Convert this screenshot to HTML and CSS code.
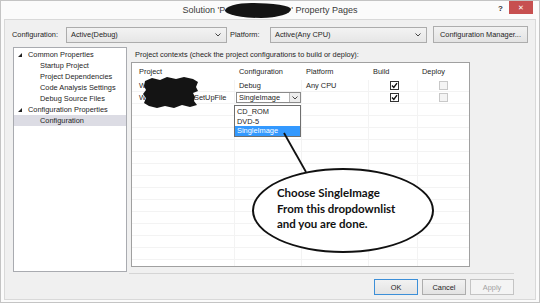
FILE: index.html
```html
<!DOCTYPE html>
<html lang="en">
<head>
    <meta charset="UTF-8">
    <title>Solution Property Pages</title>
    <link rel="stylesheet" href="styles.css">
</head>
<body>
    <div class="window">
        <div class="titlebar">
            <div class="title">Solution 'P<span class="blot-title"></span>' Property Pages</div>
            <div class="title-tools">
                <span class="title-help">?</span>
                <span class="title-close">&#x2715;</span>
            </div>
        </div>
        <div class="client">
            <div class="toolbar">
                <span class="lbl lbl-config">Configuration:</span>
                <div class="combo combo-config">
                    <span>Active(Debug)</span>
                    <svg width="6" height="4" viewBox="0 0 6 4"><path d="M0.5 0.5L3 3L5.5 0.5" fill="none" stroke="#444" stroke-width="1"/></svg>
                </div>
                <span class="lbl lbl-platform">Platform:</span>
                <div class="combo combo-platform">
                    <span>Active(Any CPU)</span>
                    <svg width="6" height="4" viewBox="0 0 6 4"><path d="M0.5 0.5L3 3L5.5 0.5" fill="none" stroke="#444" stroke-width="1"/></svg>
                </div>
                <button class="btn btn-manager">Configuration Manager...</button>
            </div>

            <div class="main">
                <ul class="tree">
                    <li class="node"><svg class="expander" width="4" height="4" viewBox="0 0 4 4"><polygon points="4,0 4,4 0,4" fill="#222"/></svg>Common Properties</li>
                    <li class="leaf">Startup Project</li>
                    <li class="leaf">Project Dependencies</li>
                    <li class="leaf">Code Analysis Settings</li>
                    <li class="leaf">Debug Source Files</li>
                    <li class="node"><svg class="expander" width="4" height="4" viewBox="0 0 4 4"><polygon points="4,0 4,4 0,4" fill="#222"/></svg>Configuration Properties</li>
                    <li class="leaf selected">Configuration</li>
                </ul>

                <div class="contexts">
                    <div class="contexts-label">Project contexts (check the project configurations to build or deploy):</div>
                    <div class="grid">
                        <div class="row row-head">
                            <div class="cell">Project</div>
                            <div class="cell">Configuration</div>
                            <div class="cell">Platform</div>
                            <div class="cell">Build</div>
                            <div class="cell">Deploy</div>
                        </div>
                        <div class="row">
                            <div class="cell">W</div>
                            <div class="cell">Debug</div>
                            <div class="cell">Any CPU</div>
                            <div class="cell cell-check"><span class="check"><svg width="7" height="7" viewBox="0 0 7 7"><path d="M1 3.6L2.8 5.4L6 1.2" fill="none" stroke="#111" stroke-width="1.4"/></svg></span></div>
                            <div class="cell cell-check"><span class="check check-off"></span></div>
                        </div>
                        <div class="row">
                            <div class="cell">W<span class="hidden-name"></span>SetUpFile</div>
                            <div class="cell cell-combo">
                                <div class="edit-combo">
                                    <span class="edit-text">SingleImage</span>
                                    <span class="edit-arrow"><svg width="6" height="4" viewBox="0 0 6 4"><path d="M0.5 0.5L3 3L5.5 0.5" fill="none" stroke="#444" stroke-width="1"/></svg></span>
                                </div>
                            </div>
                            <div class="cell"></div>
                            <div class="cell cell-check"><span class="check"><svg width="7" height="7" viewBox="0 0 7 7"><path d="M1 3.6L2.8 5.4L6 1.2" fill="none" stroke="#111" stroke-width="1.4"/></svg></span></div>
                            <div class="cell cell-check"><span class="check check-off"></span></div>
                        </div>
                        <div class="row"><div class="cell"></div><div class="cell"></div><div class="cell"></div><div class="cell"></div><div class="cell"></div></div>
                        <div class="row"><div class="cell"></div><div class="cell"></div><div class="cell"></div><div class="cell"></div><div class="cell"></div></div>
                        <div class="row"><div class="cell"></div><div class="cell"></div><div class="cell"></div><div class="cell"></div><div class="cell"></div></div>
                        <div class="row"><div class="cell"></div><div class="cell"></div><div class="cell"></div><div class="cell"></div><div class="cell"></div></div>
                        <div class="row"><div class="cell"></div><div class="cell"></div><div class="cell"></div><div class="cell"></div><div class="cell"></div></div>
                        <div class="row"><div class="cell"></div><div class="cell"></div><div class="cell"></div><div class="cell"></div><div class="cell"></div></div>
                        <div class="row"><div class="cell"></div><div class="cell"></div><div class="cell"></div><div class="cell"></div><div class="cell"></div></div>
                        <div class="row"><div class="cell"></div><div class="cell"></div><div class="cell"></div><div class="cell"></div><div class="cell"></div></div>
                        <div class="row"><div class="cell"></div><div class="cell"></div><div class="cell"></div><div class="cell"></div><div class="cell"></div></div>
                        <div class="row"><div class="cell"></div><div class="cell"></div><div class="cell"></div><div class="cell"></div><div class="cell"></div></div>
                        <div class="row"><div class="cell"></div><div class="cell"></div><div class="cell"></div><div class="cell"></div><div class="cell"></div></div>
                        <div class="row"><div class="cell"></div><div class="cell"></div><div class="cell"></div><div class="cell"></div><div class="cell"></div></div>
                        <div class="row"><div class="cell"></div><div class="cell"></div><div class="cell"></div><div class="cell"></div><div class="cell"></div></div>
                        <div class="row"><div class="cell"></div><div class="cell"></div><div class="cell"></div><div class="cell"></div><div class="cell"></div></div>

                        <!-- scribbled-out project names -->
                        <svg class="blot-grid" width="56" height="31" viewBox="0 0 56 31">
                            <path d="M2 4 L9 1 L17 3 L24 0 L33 2 L41 0 L50 2 L55 5 L53 10 L55 14 L50 16 L52 20 L51 24 L54 28 L47 30 L39 28 L31 31 L22 29 L14 31 L6 29 L1 26 L3 21 L0 17 L3 13 L1 9 Z" fill="#141414"/>
                        </svg>

                        <ul class="dropdown">
                            <li>CD_ROM</li>
                            <li>DVD-5</li>
                            <li class="active">SingleImage</li>
                        </ul>
                    </div>
                </div>
            </div>

            <div class="footer">
                <div class="separator"></div>
                <div class="buttons">
                    <button class="btn btn-ok">OK</button>
                    <button class="btn">Cancel</button>
                    <button class="btn btn-disabled">Apply</button>
                </div>
            </div>
        </div>
    </div>

    <!-- annotation drawn over the screenshot -->
    <svg class="callout-line" width="540" height="303" viewBox="0 0 540 303">
        <line x1="284" y1="133" x2="306" y2="172" stroke="#111" stroke-width="1.8"/>
    </svg>
    <div class="callout">
        Choose SingleImage<br>
        From this dropdownlist<br>
        and you are done.
    </div>
</body>
</html>
```

FILE: styles.css
```css
body {
    margin: 0;
    background: #fff;
    font-family: "Liberation Sans", Arial, sans-serif;
    font-size: 7.4px;
    color: #1e1e1e;
}
ul {
    margin: 0;
    padding: 0;
    list-style: none;
}
.window {
    width: 540px;
    height: 303px;
    box-sizing: border-box;
    border: 1px solid #c4c4c4;
    background: #fbfbfb;
    padding: 0 3px 2px;
    display: flex;
    flex-direction: column;
}

/* title bar */
.titlebar {
    height: 18px;
    display: grid;
    grid-template-columns: 1fr auto 1fr;
}
.title {
    grid-column: 2;
    font-size: 9px;
    line-height: 18px;
    color: #3a3a3a;
    white-space: nowrap;
}
.blot-title {
    display: inline-block;
    width: 66px;
    height: 15px;
    vertical-align: middle;
    background: #141414;
    border-radius: 40% 60% 45% 55% / 50% 40% 60% 50%;
}
.title-tools {
    grid-column: 3;
    justify-self: end;
    display: flex;
    align-items: flex-start;
}
.title-help {
    font-size: 8px;
    font-weight: bold;
    color: #333;
    margin: 3px 6px 0 0;
}
.title-close {
    width: 24px;
    height: 13px;
    margin-right: 3px;
    background: #c75050;
    color: #fff;
    font-size: 7px;
    display: flex;
    align-items: center;
    justify-content: center;
}

/* dialog body */
.client {
    flex: 1;
    border: 1px solid #d9d9d9;
    background: #f0f0f0;
    display: flex;
    flex-direction: column;
}
.toolbar {
    display: flex;
    align-items: center;
    height: 17px;
    padding: 6px 0 0 7px;
}
.lbl-config {
    width: 54px;
}
.lbl-platform {
    width: 40px;
    padding-left: 3px;
}
.combo {
    box-sizing: border-box;
    height: 16px;
    border: 1px solid #acacac;
    background: linear-gradient(#f3f3f3, #e6e6e6);
    display: flex;
    align-items: center;
    justify-content: space-between;
    padding: 0 5px 0 4px;
}
.combo-config {
    width: 161px;
}
.combo-platform {
    width: 157px;
}
.btn {
    box-sizing: border-box;
    height: 16px;
    width: 44px;
    padding: 0;
    border: 1px solid #adadad;
    background: linear-gradient(#f2f2f2, #e3e3e3);
    font-family: inherit;
    font-size: 7.4px;
    color: #1e1e1e;
}
.btn-manager {
    width: 95px;
    height: 17px;
    margin-left: 6px;
}

.main {
    display: flex;
    height: 225px;
    margin-top: 4px;
    padding-left: 8px;
}
.tree {
    box-sizing: border-box;
    width: 114px;
    height: 225px;
    border: 1px solid #a9abb0;
    background: #fff;
    padding-top: 1px;
}
.tree li {
    height: 11px;
    line-height: 11px;
    white-space: nowrap;
}
.tree .node {
    padding-left: 4px;
}
.tree .expander {
    margin-right: 6px;
    vertical-align: 0;
}
.tree .leaf {
    padding-left: 26px;
}
.tree .selected {
    background: #dcdce4;
}

.contexts {
    width: 339px;
    margin-left: 4px;
}
.contexts-label {
    height: 15px;
    line-height: 15px;
    padding-left: 4px;
    white-space: nowrap;
}
.grid {
    position: relative;
    box-sizing: border-box;
    height: 205px;
    border: 1px solid #a0a0a0;
    background: #fff;
    overflow: hidden;
}
.row {
    display: grid;
    grid-template-columns: 103px 67px 67px 49px 52px;
    height: 12px;
}
.row-head {
    height: 17px;
}
.cell {
    box-sizing: border-box;
    display: flex;
    align-items: center;
    padding-left: 4px;
    white-space: nowrap;
    border-right: 1px solid #f3f3f3;
    border-bottom: 1px solid #f3f3f3;
}
.cell:first-child {
    padding-left: 7px;
}
.row-head .cell {
    border: none;
}
.hidden-name {
    display: inline-block;
    width: 48px;
}
.cell-check {
    padding-left: 21px;
}
.check {
    box-sizing: border-box;
    width: 9px;
    height: 9px;
    border: 1px solid #333;
    background: #fff;
    display: flex;
    align-items: center;
    justify-content: center;
}
.check-off {
    border-color: #c8c8c8;
    background: #f4f4f4;
}
.cell-combo {
    padding-left: 1px;
}
.edit-combo {
    box-sizing: border-box;
    width: 65px;
    height: 11px;
    border: 1px solid #8a8a8a;
    background: #fff;
    display: flex;
}
.edit-text {
    flex: 1;
    padding-left: 2px;
    line-height: 9px;
}
.edit-arrow {
    width: 10px;
    border-left: 1px solid #b5b5b5;
    background: #ececec;
    display: flex;
    align-items: center;
    justify-content: center;
}
.blot-grid {
    position: absolute;
    left: 11px;
    top: 14px;
}
.dropdown {
    position: absolute;
    left: 102px;
    top: 42px;
    box-sizing: border-box;
    width: 67px;
    border: 1px solid #6f6f6f;
    background: #fff;
    padding-top: 1px;
}
.dropdown li {
    height: 9.5px;
    line-height: 9.5px;
    padding-left: 2px;
}
.dropdown .active {
    background: #3399ff;
    color: #fff;
}

.footer {
    padding-left: 124px;
    padding-right: 21px;
}
.separator {
    margin-top: 1px;
    border-top: 1px solid #d5d5d5;
}
.buttons {
    display: flex;
    justify-content: flex-end;
    gap: 4px;
    margin-top: 5px;
}
.btn-ok {
    border-color: #3c8fd8;
}
.btn-disabled {
    border-color: #c4c4c4;
    background: #f4f4f4;
    color: #a2a2a2;
}

/* annotation */
.callout-line {
    position: absolute;
    left: 0;
    top: 0;
    pointer-events: none;
}
.callout {
    position: absolute;
    left: 252px;
    top: 168px;
    box-sizing: border-box;
    width: 182px;
    height: 85px;
    border: 2px solid #111;
    border-radius: 50%;
    background: #fff;
    padding: 15px 0 0 23px;
    font-family: Lato, "Liberation Sans", sans-serif;
    font-weight: bold;
    font-size: 11.5px;
    line-height: 15.5px;
    color: #111;
}
```
